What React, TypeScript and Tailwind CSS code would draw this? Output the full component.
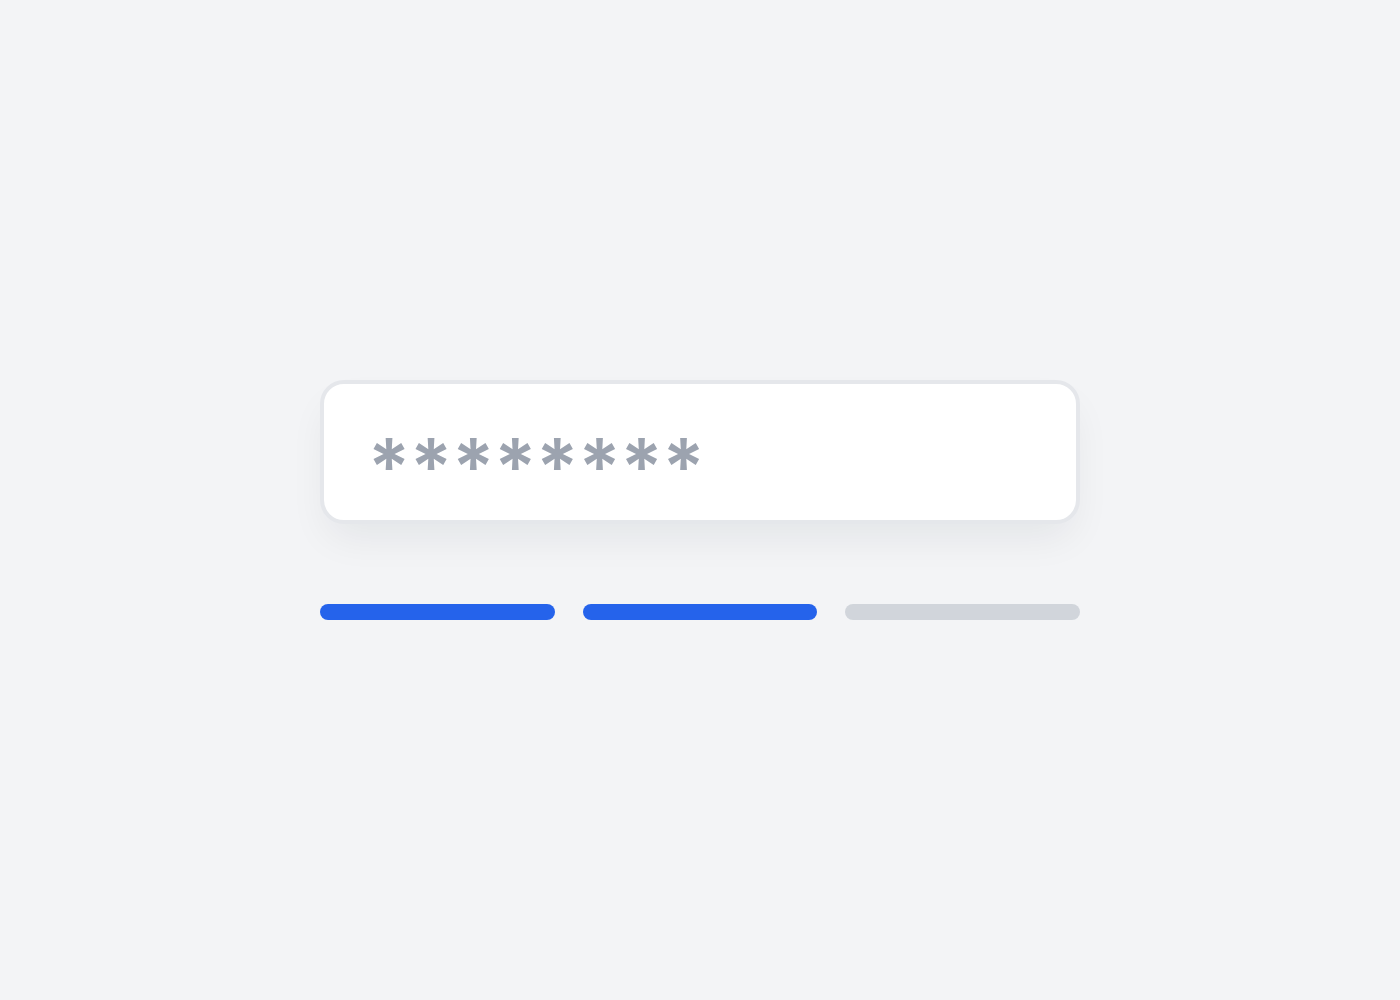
export default function App() {
  return (
    <div className="flex min-h-screen w-full items-center justify-center bg-[#f3f4f6] font-['Inter',sans-serif]">
      <div className="flex w-[760px] flex-col">
        <div className="flex h-[144px] items-center rounded-3xl border-4 border-[#e5e7eb] bg-white pl-11 pr-12 shadow-[0_20px_40px_-8px_rgba(17,24,39,0.07)]">
          <span className="pt-[30px] text-[78px] leading-none font-semibold text-[#9ca3af]">********</span>
        </div>
        <div className="mt-20 grid grid-cols-3 gap-7">
          <div className="h-4 rounded-full bg-[#2563eb]" />
          <div className="h-4 rounded-full bg-[#2563eb]" />
          <div className="h-4 rounded-full bg-[#d1d5db]" />
        </div>
      </div>
    </div>
  );
}
